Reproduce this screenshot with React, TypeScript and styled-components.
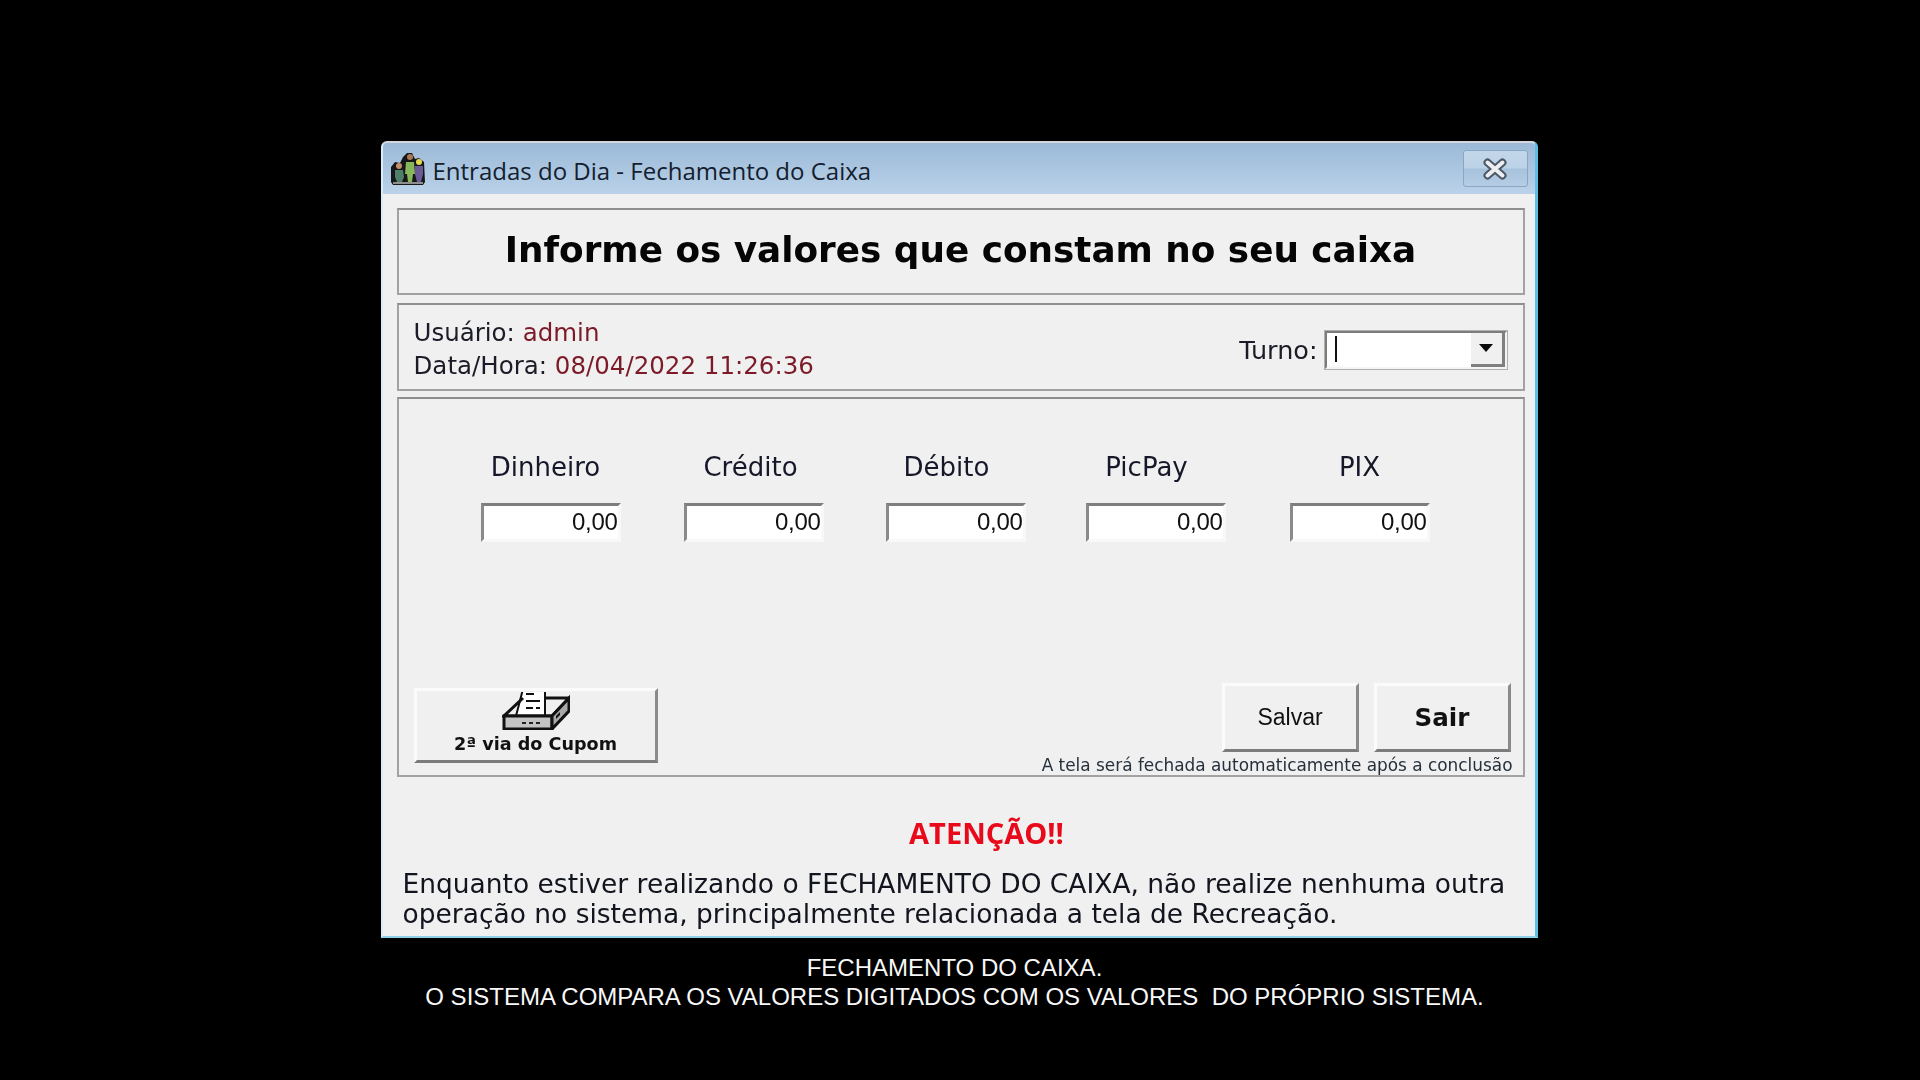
import React from "react";
import styled, { createGlobalStyle } from "styled-components";

const Global = createGlobalStyle`
  html, body { margin: 0; padding: 0; background: #000; }
  body { width: 1920px; height: 1080px; overflow: hidden; }
`;

const Page = styled.main`
  display: flex;
  flex-direction: column;
  align-items: center;
  padding: 141px 2px 0 0;
  height: 1080px;
  box-sizing: border-box;
  background: #000;
`;

const Window = styled.section`
  width: 1157px;
  height: 797px;
  box-sizing: border-box;
  display: flex;
  flex-direction: column;
  background: #f0f0f0;
  border-top: 2px solid #d4d8dc;
  border-left: 2px solid #dcecf6;
  border-right: 3px solid #5cc0e6;
  border-bottom: 2px solid #8fd0e8;
  border-radius: 6px 6px 0 0;
  filter: blur(0.55px);
`;

const TitleBar = styled.header`
  height: 51px;
  flex: none;
  display: flex;
  align-items: center;
  padding: 0 7px 0 7px;
  gap: 7px;
  background: linear-gradient(#9bb9d7, #bad2e9);
  border-radius: 4px 4px 0 0;
`;

const TitleText = styled.span`
  flex: 1;
  padding-top: 4px;
  font-family: "Open Sans", sans-serif;
  font-size: 24px;
  color: #14202e;
`;

const CloseButton = styled.div`
  width: 65px;
  height: 37px;
  box-sizing: border-box;
  display: flex;
  align-items: center;
  justify-content: center;
  border: 1px solid #8ba6c2;
  border-radius: 3px;
  background: linear-gradient(#c3d7ea 0%, #bcd2e7 48%, #a7c2dc 52%, #b5cde5 100%);
`;

const Content = styled.div`
  flex: 1;
  display: flex;
  flex-direction: column;
  padding: 14px 10px 0 14px;
`;

const Panel = styled.div<{ $h: number; $mb: number }>`
  height: ${(p) => p.$h}px;
  margin-bottom: ${(p) => p.$mb}px;
  flex: none;
  box-sizing: border-box;
  border: 2px solid #a2a2a2;
  border-top-color: #8e8e8e;
`;

const HeadPanel = styled(Panel)`
  display: flex;
  align-items: center;
  justify-content: center;
`;

const Heading = styled.h1`
  margin: 0 0 4px;
  font-family: "DejaVu Sans", sans-serif;
  font-weight: 700;
  font-size: 35.8px;
  color: #050505;
`;

const InfoPanel = styled(Panel)`
  display: flex;
  align-items: center;
  justify-content: space-between;
  padding: 0 15px 0 15px;
`;

const InfoText = styled.div`
  padding-top: 4px;
  font-family: "DejaVu Sans", sans-serif;
  font-size: 24.5px;
  line-height: 33px;
  color: #1c1c28;
`;

const Accent = styled.span`
  color: #7c1a28;
`;

const Turno = styled.div`
  display: flex;
  align-items: center;
  gap: 6px;
  margin-top: 5px;
  font-family: "DejaVu Sans", sans-serif;
  font-size: 25.5px;
  color: #1c1c28;
`;

const Combo = styled.div`
  width: 184px;
  height: 40px;
  box-sizing: border-box;
  display: flex;
  align-items: stretch;
  background: #fff;
  border: 3px solid;
  border-color: #7c7c7c #f4f4f4 #f4f4f4 #7c7c7c;
  outline: 1px solid #b0b0b0;
  outline-offset: -1px;
`;

const Caret = styled.span`
  width: 2px;
  height: 26px;
  margin: 3px 0 0 8px;
  background: #111;
`;

const ComboArrow = styled.div`
  margin-left: auto;
  width: 34px;
  display: flex;
  align-items: center;
  justify-content: center;
  background: #f0f0f0;
  border-right: 3px solid #808080;
  border-bottom: 3px solid #808080;
  box-sizing: border-box;

  &::after {
    content: "";
    border-left: 7px solid transparent;
    border-right: 7px solid transparent;
    border-top: 8px solid #0a0a0a;
  }
`;

const MainPanel = styled(Panel)`
  display: flex;
  flex-direction: column;
  justify-content: space-between;
  padding: 53px 12px 0 15px;
`;

const Fields = styled.div`
  display: flex;
  padding-left: 67px;
`;

const Field = styled.div<{ $ml: number }>`
  width: 140px;
  margin-left: ${(p) => p.$ml}px;
`;

const FieldLabel = styled.div<{ $shift: number }>`
  height: 30px;
  margin-bottom: 21px;
  padding-right: ${(p) => p.$shift * 2}px;
  text-align: center;
  font-family: "DejaVu Sans", sans-serif;
  font-size: 26px;
  line-height: 30px;
  color: #16182a;
  white-space: nowrap;
`;

const MoneyInput = styled.div`
  height: 39px;
  box-sizing: border-box;
  text-align: right;
  background: #fff;
  border: 3px solid;
  border-color: #7e7e7e #f8f8f8 #f8f8f8 #8a8a8a;
  font-family: "Liberation Sans", sans-serif;
  font-size: 24px;
  line-height: 31px;
  letter-spacing: -0.3px;
  color: #111;
`;

const BottomRow = styled.div`
  display: flex;
  justify-content: space-between;
  align-items: flex-end;
`;

const RaisedButton = styled.div`
  box-sizing: border-box;
  background: #f0f0f0;
  border: 3px solid;
  border-color: #fbfbfb #8a8a8a #7c7c7c #fbfbfb;
  color: #111;
`;

const CouponButton = styled(RaisedButton)`
  width: 244px;
  height: 75px;
  margin-bottom: 12px;
  display: flex;
  flex-direction: column;
  align-items: center;
  overflow: hidden;
  font-family: "DejaVu Sans", sans-serif;
  font-weight: 700;
  font-size: 17.6px;
  line-height: 22px;
`;

const CouponLabel = styled.span`
  margin-top: 3px;
`;

const RightBlock = styled.div`
  display: flex;
  flex-direction: column;
  align-items: flex-end;
`;

const ButtonPair = styled.div`
  display: flex;
  gap: 15px;
`;

const ActionButton = styled(RaisedButton)<{ $bold?: boolean }>`
  width: 137px;
  height: 69px;
  display: flex;
  align-items: center;
  justify-content: center;
  font-family: ${(p) => (p.$bold ? '"DejaVu Sans"' : '"Liberation Sans"')}, sans-serif;
  font-weight: ${(p) => (p.$bold ? 700 : 400)};
  font-size: ${(p) => (p.$bold ? 24.6 : 23)}px;
`;

const Note = styled.div`
  margin-right: -2px;
  height: 23px;
  font-family: "DejaVu Sans", sans-serif;
  font-size: 16.9px;
  line-height: 27px;
  color: #26303c;
  white-space: nowrap;
`;

const Warning = styled.div`
  padding: 38px 0 0 6px;
  font-family: "DejaVu Sans", sans-serif;
  font-size: 26.47px;
  line-height: 29.5px;
  color: #12141e;
  white-space: nowrap;
`;

const WarningTitle = styled.div`
  margin-bottom: 18px;
  padding-left: 46px;
  text-align: center;
  font-family: "Open Sans", sans-serif;
  font-weight: 700;
  font-size: 29px;
  line-height: 36px;
  color: #e8091a;
`;

const Caption = styled.p`
  margin: 15px 9px 0 0;
  text-align: center;
  font-family: "Liberation Sans", sans-serif;
  font-size: 24px;
  line-height: 29px;
  color: #f8f8f8;
  white-space: pre;
`;

const AppIcon = () => (
  <svg width="36" height="36" viewBox="0 0 36 36">
    <path d="M1 16l4-5 5 1 3-6 4-4h5l3 6 4-1 5 4 1 20-2 3H3l-2-3z" fill="#17171a" />
    <circle cx="20" cy="6" r="3" fill="#a87a54" />
    <path d="M16 11h8l1 12h-2l-1 8h-4l-1-8h-2z" fill="#86b85a" />
    <circle cx="9" cy="15" r="3" fill="#c4906a" />
    <path d="M5 19h8l1 7-2 5H7l-2-5z" fill="#4d7f6a" />
    <circle cx="29" cy="11" r="3" fill="#e6d84e" />
    <path d="M25 15h8v8l-2 8h-4l-2-8z" fill="#6a5a98" />
    <path d="M3 31h30v2H3z" fill="#8e8e8e" />
  </svg>
);

const CloseIcon = () => (
  <svg width="28" height="22" viewBox="0 0 28 22">
    <path d="M6.5 4.5L21.5 17.5M21.5 4.5L6.5 17.5" stroke="#4c5866" strokeWidth="8" strokeLinecap="round" />
    <path d="M6.5 4.5L21.5 17.5M21.5 4.5L6.5 17.5" stroke="#eceef2" strokeWidth="4" strokeLinecap="round" />
  </svg>
);

const PrinterIcon = () => (
  <svg width="68" height="38" viewBox="0 0 68 38" style={{ flex: "none", marginTop: 1 }}>
    <path d="M21 -3h22v27H14z" fill="#fff" stroke="#111" strokeWidth="2" />
    <path d="M24 1h8v2h-8zM24 8h14v2H24zM24 15h7v2h-7zM34 15h4v2h-4z" fill="#111" />
    <path d="M21 6L2 24h48L67 6H43" fill="none" stroke="#111" strokeWidth="3" />
    <path d="M2 24h48v13H2z" fill="#c4c4c4" stroke="#111" strokeWidth="3" />
    <path d="M50 24L67 6v13L50 37z" fill="#a8a8a8" stroke="#111" strokeWidth="3" />
    <path d="M20 30h4v2h-4zM27 30h4v2h-4zM34 30h4v2h-4z" fill="#222" />
    <path d="M54 24l4-4v3l-4 4z" fill="#111" />
  </svg>
);

const fields = [
  { name: "Dinheiro", ml: 0, shift: 5 },
  { name: "Crédito", ml: 63, shift: 3 },
  { name: "Débito", ml: 62, shift: 9 },
  { name: "PicPay", ml: 60, shift: 9 },
  { name: "PIX", ml: 64, shift: 0 },
];

export default function App() {
  return (
    <Page>
      <Global />
      <Window>
        <TitleBar>
          <AppIcon />
          <TitleText>Entradas do Dia - Fechamento do Caixa</TitleText>
          <CloseButton>
            <CloseIcon />
          </CloseButton>
        </TitleBar>
        <Content>
          <HeadPanel $h={87} $mb={8}>
            <Heading>Informe os valores que constam no seu caixa</Heading>
          </HeadPanel>
          <InfoPanel $h={88} $mb={6}>
            <InfoText>
              Usuário: <Accent>admin</Accent>
              <br />
              Data/Hora: <Accent>08/04/2022 11:26:36</Accent>
            </InfoText>
            <Turno>
              Turno:
              <Combo>
                <Caret />
                <ComboArrow />
              </Combo>
            </Turno>
          </InfoPanel>
          <MainPanel $h={380} $mb={0}>
            <Fields>
              {fields.map((f) => (
                <Field key={f.name} $ml={f.ml}>
                  <FieldLabel $shift={f.shift}>{f.name}</FieldLabel>
                  <MoneyInput>0,00</MoneyInput>
                </Field>
              ))}
            </Fields>
            <BottomRow>
              <CouponButton>
                <PrinterIcon />
                <CouponLabel>2ª via do Cupom</CouponLabel>
              </CouponButton>
              <RightBlock>
                <ButtonPair>
                  <ActionButton>Salvar</ActionButton>
                  <ActionButton $bold>Sair</ActionButton>
                </ButtonPair>
                <Note>A tela será fechada automaticamente após a conclusão</Note>
              </RightBlock>
            </BottomRow>
          </MainPanel>
          <Warning>
            <WarningTitle>ATENÇÃO!!</WarningTitle>
            Enquanto estiver realizando o FECHAMENTO DO CAIXA, não realize nenhuma outra
            <br />
            operação no sistema, principalmente relacionada a tela de Recreação.
          </Warning>
        </Content>
      </Window>
      <Caption>
        {"FECHAMENTO DO CAIXA.\nO SISTEMA COMPARA OS VALORES DIGITADOS COM OS VALORES  DO PRÓPRIO SISTEMA."}
      </Caption>
    </Page>
  );
}
